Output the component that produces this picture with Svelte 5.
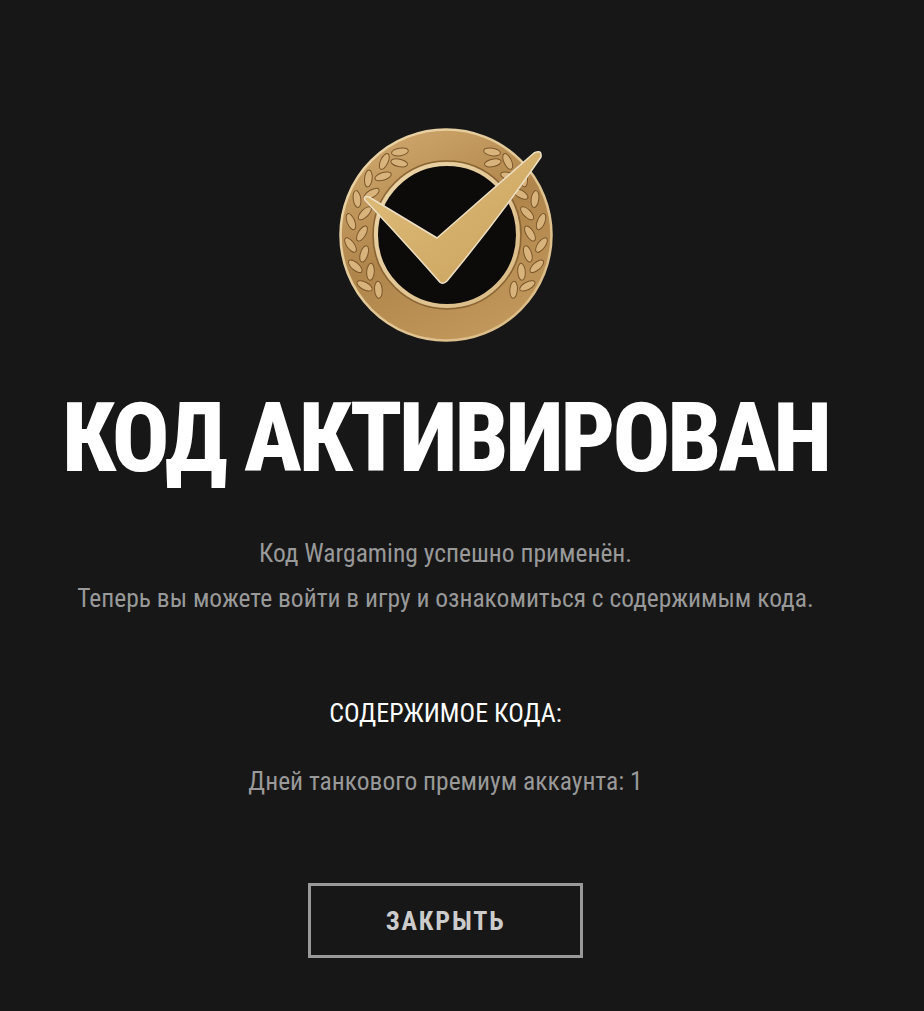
<script>
    // one branch of the laurel: [angle on the ring in degrees, radius, leaf tilt]
    const branch = [
        [141, 87, 35], [148, 96, -30], [154, 84, 30], [161, 96, -30], [167, 84, 30],
        [174, 96, -30], [181, 84, 30], [188, 96, -30], [195, 84, 30], [202, 96, -30],
        [209, 85, 30], [216, 96, -30], [223, 86, 30], [230, 96, -25], [237, 86, 45],
        [241, 95, 20]
    ];
    const leaves = branch.flatMap(([a, r, t]) => {
        const rad = (a * Math.PI) / 180;
        const x = r * Math.cos(rad);
        const y = r * Math.sin(rad);
        return [
            { x: 107 + x, y: 107 + y, t: a + t },
            { x: 107 - x, y: 107 + y, t: -(a + t) }
        ];
    });
</script>

<main class="page">
    <svg class="medal" viewBox="0 0 214 214" width="214" height="214" aria-hidden="true">
        <defs>
            <linearGradient id="ring" x1="0.2" y1="0" x2="0.7" y2="1">
                <stop offset="0" stop-color="#cfa76c" />
                <stop offset="0.5" stop-color="#b0854b" />
                <stop offset="1" stop-color="#c2985c" />
            </linearGradient>
            <linearGradient id="rim" x1="0" y1="0" x2="1" y2="1">
                <stop offset="0" stop-color="#ecd6aa" />
                <stop offset="1" stop-color="#d9b983" />
            </linearGradient>
            <linearGradient id="tick" x1="0" y1="0" x2="1" y2="1">
                <stop offset="0" stop-color="#e0bf7c" />
                <stop offset="1" stop-color="#c9a15c" />
            </linearGradient>
        </defs>
        <circle cx="107" cy="107" r="105.5" fill="url(#ring)" stroke="url(#rim)" stroke-width="2.5" />
        {#each leaves as leaf}
            <ellipse cx={leaf.x} cy={leaf.y} rx="3.8" ry="8.5" fill="#d8b47c" stroke="#7a562a" stroke-width="1" transform="rotate({leaf.t} {leaf.x} {leaf.y})" />
        {/each}
        <circle cx="108" cy="107" r="74" fill="none" stroke="#8a6534" stroke-width="1.5" />
        <circle cx="108" cy="107" r="71" fill="#0c0b0a" stroke="url(#rim)" stroke-width="4" />
        <path d="M26 72 Q24 67 30 69 L98 110 L195 25 Q203 21 202 29 Q160 90 108 153 Q103 158 99 152 Q62 110 26 72 Z" fill="url(#tick)" stroke="#eee0c4" stroke-width="1.5" stroke-linejoin="round" />
    </svg>
    <h1>КОД АКТИВИРОВАН</h1>
    <p class="text first">Код Wargaming успешно применён.</p>
    <p class="text">Теперь вы можете войти в игру и ознакомиться с содержимым кода.</p>
    <h2>СОДЕРЖИМОЕ КОДА:</h2>
    <p class="text">Дней танкового премиум аккаунта: 1</p>
    <button type="button">ЗАКРЫТЬ</button>
</main>

<style>
    :global(body) {
        background: #171717;
    }

    .page {
        width: 891px;
        height: 1011px;
        box-sizing: border-box;
        padding-top: 128px;
        display: flex;
        flex-direction: column;
        align-items: center;
        font-family: "Roboto Condensed", Roboto, "Liberation Sans", sans-serif;
        font-stretch: condensed;
        overflow: hidden;
    }

    .medal {
        display: block;
    }

    h1 {
        margin: 40px 0 0;
        color: #fff;
        font-size: 96px;
        line-height: 112px;
        font-weight: 800;
        letter-spacing: -3px;
        white-space: nowrap;
    }

    .text {
        margin: 0;
        color: #999;
        font-size: 25.5px;
        line-height: 45px;
        white-space: nowrap;
    }

    .first {
        margin-top: 37px;
    }

    h2 {
        margin: 70px 0 23px;
        color: #fff;
        font-size: 26px;
        line-height: 45px;
        font-weight: 400;
    }

    button {
        margin-top: 79px;
        width: 275px;
        height: 75px;
        background: transparent;
        border: 3px solid #999;
        color: #ccc;
        font: inherit;
        font-size: 26px;
        font-weight: 700;
        letter-spacing: 1.8px;
    }
</style>
